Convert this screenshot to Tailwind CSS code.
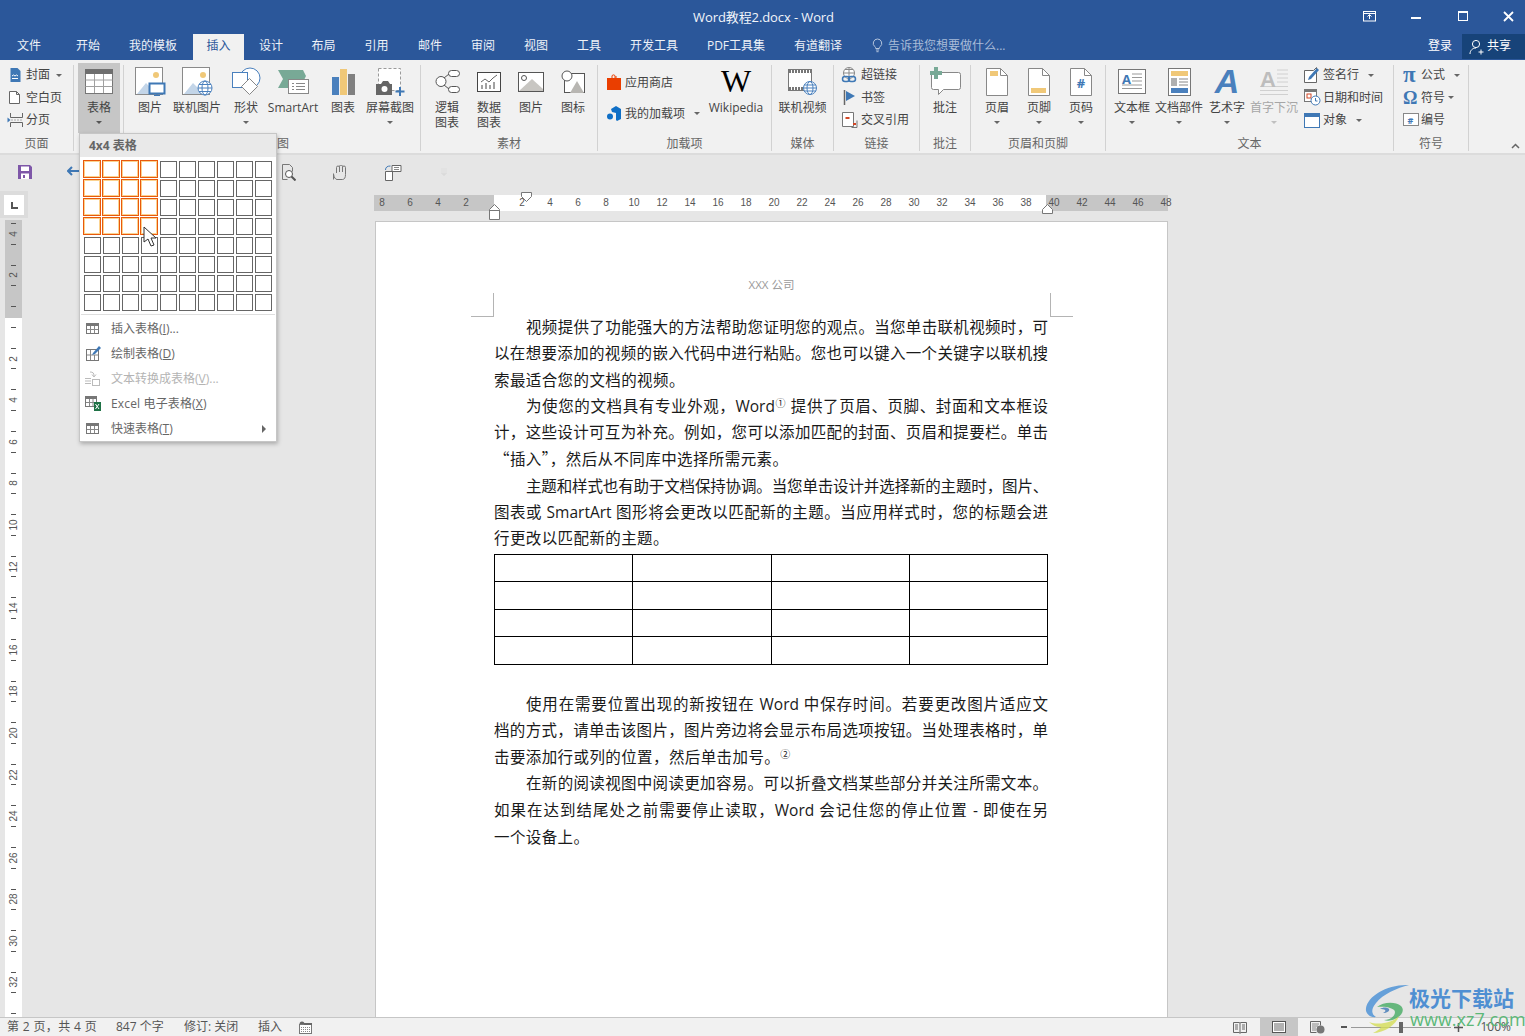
<!DOCTYPE html>
<html lang="zh-CN">
<head>
  <meta charset="UTF-8" />
  <title>Word教程2.docx - Word</title>
  <script src="https://cdn.jsdelivr.net/npm/@tailwindcss/browser@4"></script>
</head>
<body class="w-[1525px] h-[1036px] overflow-hidden relative bg-[#e6e6e6] text-[12px] text-[#444] font-['Open_Sans','Noto_Sans_CJK_SC',sans-serif]">

  <!-- Title bar -->
  <div class="h-[34px] bg-[#2b579a] grid grid-cols-[1fr_auto_1fr] items-center text-white">
    <div></div>
    <div class="text-[13px] tracking-[-0.1px] text-[#f2f5fa] mt-[1px] ml-[2px]">Word教程2.docx - Word</div>
    <div class="flex justify-end items-center h-full">
      <svg width="14" height="11" viewBox="0 0 14 11" class="mr-[34px] -mt-[2px]"><rect x=".5" y=".5" width="12" height="9.5" fill="none" stroke="#fff"/><path d="M.5 2.5h12M6.5 8V4M4.5 5.5l2-2 2 2" stroke="#fff" fill="none"/></svg>
      <div class="w-[10px] h-[2px] bg-white mr-[37px] mt-[2px]"></div>
      <div class="w-[10px] h-[10px] border border-white border-t-[2px] mr-[35px] -mt-[2px]"></div>
      <svg width="11" height="11" viewBox="0 0 11 11" class="mr-[11px] -mt-[2px]"><path d="M1 1l9 9M10 1l-9 9" stroke="#fff" stroke-width="1.8"/></svg>
    </div>
  </div>

  <!-- Tabs -->
  <div class="h-[26px] bg-[#2b579a] flex items-start text-[#eef2f8] relative">
    <div class="w-[58px] h-[25px] leading-[23px] text-center">文件</div>
    <div class="w-[60px] h-[25px] leading-[23px] text-center">开始</div>
    <div class="w-[70px] h-[25px] leading-[23px] text-center">我的模板</div>
    <div class="ml-[5px] w-[51px] h-[26px] leading-[23px] text-center bg-[#f1f1f1] text-[#2b579a]">插入</div>
    <div class="w-[54px] h-[25px] leading-[23px] text-center">设计</div>
    <div class="w-[51px] h-[25px] leading-[23px] text-center">布局</div>
    <div class="w-[55px] h-[25px] leading-[23px] text-center">引用</div>
    <div class="w-[52px] h-[25px] leading-[23px] text-center">邮件</div>
    <div class="w-[54px] h-[25px] leading-[23px] text-center">审阅</div>
    <div class="w-[52px] h-[25px] leading-[23px] text-center">视图</div>
    <div class="w-[54px] h-[25px] leading-[23px] text-center">工具</div>
    <div class="w-[76px] h-[25px] leading-[23px] text-center">开发工具</div>
    <div class="w-[88px] h-[25px] leading-[23px] text-center whitespace-nowrap">PDF工具集</div>
    <div class="w-[76px] h-[25px] leading-[23px] text-center">有道翻译</div>
    <div class="ml-[16px] h-[25px] flex items-center text-[#a9bcd8] -mt-[1px]">
      <svg width="11" height="15" viewBox="0 0 11 15" class="mr-[5px]"><path d="M5.5 1a4.3 4.3 0 0 0-2.6 7.7c.6.6.8 1 .8 1.8h3.6c0-.8.2-1.2.8-1.8A4.3 4.3 0 0 0 5.5 1zM3.9 12h3.2M4.4 13.7h2.2" fill="none" stroke="#b4c4dc"/></svg>
      <span>告诉我您想要做什么...</span>
    </div>
    <div class="ml-auto w-[40px] text-center h-[25px] leading-[23px] text-white">登录</div>
    <div class="ml-[2px] w-[63px] h-[25px] bg-[#174379] flex items-center text-white">
      <svg width="16" height="16" viewBox="0 0 16 16" class="ml-[7px] mr-[2px]"><circle cx="7" cy="5" r="3.6" fill="none" stroke="#fff"/><path d="M1 15c0-3.5 2.5-6 6-6M9.5 13h5M12 10.5v5" fill="none" stroke="#fff"/></svg>
      <span class="-mt-[2px]">共享</span>
    </div>
  </div>

  <!-- Ribbon -->
  <div class="h-[95px] bg-[#f1f1f1] border-b-2 border-[#dcdcdc] flex pt-[5px] items-start">

    <!-- 页面 -->
    <div class="w-[74px] h-[86px] border-r border-[#d2d2d2] flex flex-col">
      <div class="h-[72px] pl-[7px] -mt-[1px] mb-[1px]">
        <div class="h-[22.5px] flex items-center">
          <svg width="19" height="16" viewBox="0 0 19 16" class="shrink-0"><path d="M3.5 1h7l3 3v11h-10z" fill="#3f78b5"/><path d="M5 9l1.5-1 1.5 1 1.5-1 1.5 1" stroke="#fff" fill="none"/><path d="M5 11.5h6" stroke="#fff"/></svg>
          <span>封面</span><i class="ml-[6px] w-0 h-0 border-x-[3px] border-t-[3px] border-x-transparent border-t-[#666]"></i>
        </div>
        <div class="h-[22.5px] flex items-center">
          <svg width="19" height="15" viewBox="0 0 19 15" class="shrink-0"><path d="M2.5 1.5h7l3 3v9h-10z M9.5 1.5v3h3" fill="#fff" stroke="#666"/></svg>
          <span>空白页</span>
        </div>
        <div class="h-[22.5px] flex items-center">
          <svg width="19" height="16" viewBox="0 0 19 16" class="shrink-0"><path d="M3.5 1v4.5h12V1M3.5 15v-4.5h12V15" fill="none" stroke="#666"/><path d="M.5 5.5l3 2.5-3 2.5z" fill="#3f78b5"/><path d="M4 8h12" stroke="#aaa" stroke-dasharray="2 1"/></svg>
          <span>分页</span>
        </div>
      </div>
      <div class="text-center text-[#666] leading-[14px]">页面</div>
    </div>

    <!-- 表格 -->
    <div class="w-[50px] h-[86px] border-r border-[#d2d2d2] flex flex-col">
      <div class="ml-[4px] w-[42px] h-[70px] -mt-[2px] pt-[2px] bg-[#c6c6c6] flex flex-col items-center">
        <div class="h-[33px] flex items-center justify-center">
          <svg width="28" height="25" viewBox="0 0 28 25"><rect x=".5" y=".5" width="27" height="24" fill="#fff" stroke="#767676"/><rect width="28" height="5" fill="#6e6e6e"/><path d="M.5 11h27M.5 17.500h27M9.500 5v19M18.500 5v19" stroke="#a0a0a0" fill="none"/></svg>
        </div>
        <div class="h-[15px] leading-[15px] mt-[2px]">表格</div>
        <div class="h-[15px] flex items-center"><i class="w-0 h-0 border-x-[3px] border-t-[3px] border-x-transparent border-t-[#555]"></i></div>
      </div>
    </div>

    <!-- 插图 -->
    <div class="w-[297px] h-[86px] border-r border-[#d2d2d2] flex flex-col">
      <div class="h-[72px] pl-[3px] flex">
        <div class="w-[46px] flex flex-col items-center">
          <div class="h-[33px] flex items-center justify-center">
            <svg width="31" height="29" viewBox="0 0 31 29"><rect x=".5" y=".5" width="27" height="27" fill="#fff" stroke="#8a8a8a"/><circle cx="21" cy="8" r="3" fill="#f0c878"/><path d="M2 27l9-11 6 6 3-2 5 7z" fill="#c3d5e8"/><rect x="14.500" y="16.500" width="15" height="10" fill="#fff" stroke="#3f78b5" stroke-width="2"/><path d="M22 27v2M19 28.500h6" stroke="#3f78b5"/></svg>
          </div>
          <div class="h-[15px] leading-[15px] mt-[2px] whitespace-nowrap">图片</div>
        </div>
        <div class="w-[48px] flex flex-col items-center">
          <div class="h-[33px] flex items-center justify-center">
            <svg width="31" height="29" viewBox="0 0 31 29"><rect x=".5" y=".5" width="27" height="27" fill="#fff" stroke="#8a8a8a"/><circle cx="21" cy="8" r="3" fill="#f0c878"/><path d="M2 27l9-11 6 6 3-2 5 7z" fill="#c3d5e8"/><circle cx="23" cy="21" r="7" fill="#fff" stroke="#4a80bd"/><ellipse cx="23" cy="21" rx="3" ry="7" fill="none" stroke="#4a80bd"/><path d="M16 21h14M17 17.500h12M17 24.500h12" stroke="#4a80bd"/></svg>
          </div>
          <div class="h-[15px] leading-[15px] mt-[2px] whitespace-nowrap">联机图片</div>
        </div>
        <div class="w-[50px] flex flex-col items-center">
          <div class="h-[33px] flex items-start justify-center pt-[2px]">
            <svg width="31" height="28" viewBox="0 0 31 28"><circle cx="19" cy="11" r="10" fill="#fff" stroke="#4a80bd"/><rect x="1.500" y="5.500" width="15" height="15" fill="#fff" stroke="#4a80bd"/><path d="M18.500 11.500l8 8-8 8-8-8z" fill="#fff" stroke="#888"/></svg>
          </div>
          <div class="h-[15px] leading-[15px] mt-[2px] whitespace-nowrap">形状</div>
          <div class="h-[15px] flex items-center"><i class="w-0 h-0 border-x-[3px] border-t-[3px] border-x-transparent border-t-[#666]"></i></div>
        </div>
        <div class="w-[44px] flex flex-col items-center">
          <div class="h-[33px] flex items-center justify-center">
            <svg width="31" height="24" viewBox="0 0 31 24"><path d="M0 0h25l3 6-3 6H10v6H0l5-9z" fill="#78a996"/><rect x="10.500" y="9.500" width="20" height="14" fill="#fff" stroke="#888"/><path d="M14 13.500h2M18 13.500h9M14 16.500h2M18 16.500h9M14 19.500h2M18 19.500h9" stroke="#888"/></svg>
          </div>
          <div class="h-[15px] leading-[15px] mt-[2px] whitespace-nowrap">SmartArt</div>
        </div>
        <div class="w-[56px] flex flex-col items-center">
          <div class="h-[33px] flex items-center justify-center">
            <svg width="23" height="26" viewBox="0 0 23 26"><rect x="0" y="8" width="7" height="18" fill="#4a80bd"/><rect x="8" y="0" width="7" height="26" fill="#f0c878"/><rect x="16" y="5" width="7" height="21" fill="#808080"/></svg>
          </div>
          <div class="h-[15px] leading-[15px] mt-[2px] whitespace-nowrap">图表</div>
        </div>
        <div class="w-[38px] flex flex-col items-center">
          <div class="h-[33px] flex items-center justify-center">
            <svg width="30" height="28" viewBox="0 0 30 28"><rect x="3.500" y=".5" width="22" height="22" fill="#fff" stroke="#9a9a9a" stroke-dasharray="3 2"/><path d="M1 16h5l2-3h5l2 3h2v11H1z" fill="#666"/><circle cx="9.500" cy="21" r="3" fill="#fff"/><path d="M25 19v9M20.500 23.500h9" stroke="#3f78b5" stroke-width="2"/></svg>
          </div>
          <div class="h-[15px] leading-[15px] mt-[2px] whitespace-nowrap">屏幕截图</div>
          <div class="h-[15px] flex items-center"><i class="w-0 h-0 border-x-[3px] border-t-[3px] border-x-transparent border-t-[#666]"></i></div>
        </div>
      </div>
      <div class="text-[#666] leading-[14px] pl-[141px]">插图</div>
    </div>

    <!-- 素材 -->
    <div class="w-[177px] h-[86px] border-r border-[#d2d2d2] flex flex-col">
      <div class="h-[72px] pl-[5px] flex">
        <div class="w-[42px] flex flex-col items-center">
          <div class="h-[33px] flex items-center justify-center">
            <svg width="25" height="23" viewBox="0 0 25 23"><circle cx="6" cy="11.500" r="5" fill="#fff" stroke="#555"/><rect x="13.500" y=".5" width="11" height="6" rx="3" fill="#fff" stroke="#555"/><rect x="13.500" y="16.500" width="11" height="6" rx="3" fill="#fff" stroke="#555"/><path d="M9 8l5-4M9 15l5 4" stroke="#555"/></svg>
          </div>
          <div class="leading-[15px] mt-[2px] text-center">逻辑<br>图表</div>
        </div>
        <div class="w-[42px] flex flex-col items-center">
          <div class="h-[33px] flex items-center justify-center">
            <svg width="24" height="20" viewBox="0 0 24 20"><rect x=".5" y=".5" width="23" height="19" fill="#fff" stroke="#444"/><path d="M4 10l4-3 4 3 4-4 4-3" fill="none" stroke="#666"/><path d="M5 17v-4M9 17v-6M13 17v-4M17 17v-7" stroke="#444"/></svg>
          </div>
          <div class="leading-[15px] mt-[2px] text-center">数据<br>图表</div>
        </div>
        <div class="w-[42px] flex flex-col items-center">
          <div class="h-[33px] flex items-center justify-center">
            <svg width="26" height="20" viewBox="0 0 26 20"><rect x=".5" y=".5" width="25" height="19" fill="#fff" stroke="#555"/><circle cx="6" cy="6" r="2.500" fill="none" stroke="#555"/><path d="M1 19l13-12 11 10v2z" fill="#c8c6c2"/></svg>
          </div>
          <div class="h-[15px] leading-[15px] mt-[2px]">图片</div>
        </div>
        <div class="w-[42px] flex flex-col items-center">
          <div class="h-[33px] flex items-center justify-center">
            <svg width="24" height="24" viewBox="0 0 24 24"><rect x="3.500" y="3.500" width="20" height="19" fill="#fff" stroke="#555"/><circle cx="6" cy="6" r="5" fill="#fff" stroke="#555"/><path d="M9 23l7-12 7 12z" fill="#b8b6b2"/></svg>
          </div>
          <div class="h-[15px] leading-[15px] mt-[2px]">图标</div>
        </div>
      </div>
      <div class="text-center text-[#666] leading-[14px]">素材</div>
    </div>

    <!-- 加载项 -->
    <div class="w-[174px] h-[86px] border-r border-[#d2d2d2] flex flex-col">
      <div class="h-[72px] pl-[9px] flex">
        <div class="w-[94px] pt-[2px]">
          <div class="h-[31px] flex items-center">
            <svg width="18" height="17" viewBox="0 0 18 17" class="shrink-0"><path d="M0 4h14v12H0z" fill="#ea3e00"/><path d="M5 4V2c0-1.500 3-1.500 3 0v2M9 4V2" stroke="#ea3e00" fill="none"/></svg>
            <span>应用商店</span>
          </div>
          <div class="h-[31px] flex items-center">
            <svg width="18" height="15" viewBox="0 0 18 15" class="shrink-0"><path d="M4 3l5-3 5 3v10l-4 2-1-1V7L5 6z" fill="#0f6fc6"/><circle cx="3" cy="10.500" r="3" fill="#0f6fc6"/></svg>
            <span>我的加载项</span><i class="ml-[9px] w-0 h-0 border-x-[3px] border-t-[3px] border-x-transparent border-t-[#666]"></i>
          </div>
        </div>
        <div class="w-[70px] flex flex-col items-center">
          <div class="h-[33px] flex items-center justify-center text-[32px] leading-[33px] text-black font-['Liberation_Serif',serif]">W</div>
          <div class="h-[15px] leading-[15px] mt-[2px]">Wikipedia</div>
        </div>
      </div>
      <div class="text-center text-[#666] leading-[14px]">加载项</div>
    </div>

    <!-- 媒体 -->
    <div class="w-[62px] h-[86px] border-r border-[#d2d2d2] flex flex-col">
      <div class="h-[72px] flex flex-col items-center">
        <div class="h-[33px] flex items-center justify-center">
          <svg width="29" height="26" viewBox="0 0 29 26"><rect x=".5" y=".5" width="23" height="21" fill="#fff" stroke="#777"/><path d="M1 2.500h22M1 19.500h22" stroke="#777" stroke-width="3" stroke-dasharray="2 1"/><circle cx="22" cy="19" r="6.500" fill="#fff" stroke="#4a80bd"/><ellipse cx="22" cy="19" rx="3" ry="6.500" fill="none" stroke="#4a80bd"/><path d="M15.500 19h13M16 16h12M16 22h12" stroke="#4a80bd"/></svg>
        </div>
        <div class="h-[15px] leading-[15px] mt-[2px] whitespace-nowrap">联机视频</div>
      </div>
      <div class="text-center text-[#666] leading-[14px]">媒体</div>
    </div>

    <!-- 链接 -->
    <div class="w-[86px] h-[86px] border-r border-[#d2d2d2] flex flex-col">
      <div class="h-[72px] pl-[7px] -mt-[1px] mb-[1px]">
        <div class="h-[22.5px] flex items-center">
          <svg width="20" height="16" viewBox="0 0 20 16" class="shrink-0"><circle cx="8" cy="6" r="5.500" fill="#fff" stroke="#888"/><path d="M2.500 6h11M8 .5v11M4 2.500h8" stroke="#888" fill="none"/><rect x="1.500" y="9.500" width="7" height="5" rx="2.500" fill="none" stroke="#3f78b5" stroke-width="1.500"/><rect x="7.500" y="9.500" width="7" height="5" rx="2.500" fill="none" stroke="#3f78b5" stroke-width="1.500"/></svg>
          <span>超链接</span>
        </div>
        <div class="h-[22.5px] flex items-center">
          <svg width="20" height="15" viewBox="0 0 20 15" class="shrink-0"><path d="M3.500 0v15" stroke="#666" stroke-width="1.500"/><path d="M5 1l9 5-9 5z" fill="#3f78b5"/></svg>
          <span>书签</span>
        </div>
        <div class="h-[22.5px] flex items-center">
          <svg width="20" height="16" viewBox="0 0 20 16" class="shrink-0"><path d="M1.500 .5h11v14h-11z" fill="#fff" stroke="#777"/><path d="M4.500 6h4" stroke="#d24726" stroke-width="2"/><path d="M10.500 15.500h5.500v-7" fill="none" stroke="#777"/><path d="M12 12h3" stroke="#d24726" stroke-width="2"/></svg>
          <span>交叉引用</span>
        </div>
      </div>
      <div class="text-center text-[#666] leading-[14px]">链接</div>
    </div>

    <!-- 批注 -->
    <div class="w-[51px] h-[86px] border-r border-[#d2d2d2] flex flex-col">
      <div class="h-[72px] flex flex-col items-center">
        <div class="h-[33px] flex items-center justify-center">
          <svg width="31" height="29" viewBox="0 0 31 29"><path d="M3.500 5.500h25a2 2 0 0 1 2 2v13a2 2 0 0 1-2 2h-15l-5 5v-5h-5a2 2 0 0 1-2-2v-13a2 2 0 0 1 2-2z" fill="#fff" stroke="#888"/><path d="M6 0v12M0 6h12" stroke="#78a996" stroke-width="4"/></svg>
        </div>
        <div class="h-[15px] leading-[15px] mt-[2px]">批注</div>
      </div>
      <div class="text-center text-[#666] leading-[14px]">批注</div>
    </div>

    <!-- 页眉和页脚 -->
    <div class="w-[135px] h-[86px] border-r border-[#d2d2d2] flex flex-col">
      <div class="h-[72px] pl-[5px] flex">
        <div class="w-[42px] flex flex-col items-center">
          <div class="h-[33px] flex items-center justify-center">
            <svg width="22" height="28" viewBox="0 0 22 28"><path d="M.5.500h14l7 7v20H.500z" fill="#fff" stroke="#888"/><path d="M14.500.5v7h7" fill="none" stroke="#888"/><rect x="4" y="3" width="8" height="5" fill="#f0c878"/></svg>
          </div>
          <div class="h-[15px] leading-[15px] mt-[2px]">页眉</div>
          <div class="h-[15px] flex items-center"><i class="w-0 h-0 border-x-[3px] border-t-[3px] border-x-transparent border-t-[#666]"></i></div>
        </div>
        <div class="w-[42px] flex flex-col items-center">
          <div class="h-[33px] flex items-center justify-center">
            <svg width="22" height="28" viewBox="0 0 22 28"><path d="M.5.500h14l7 7v20H.500z" fill="#fff" stroke="#888"/><path d="M14.500.5v7h7" fill="none" stroke="#888"/><rect x="3" y="20" width="15" height="5" fill="#f0c878"/></svg>
          </div>
          <div class="h-[15px] leading-[15px] mt-[2px]">页脚</div>
          <div class="h-[15px] flex items-center"><i class="w-0 h-0 border-x-[3px] border-t-[3px] border-x-transparent border-t-[#666]"></i></div>
        </div>
        <div class="w-[42px] flex flex-col items-center">
          <div class="h-[33px] flex items-center justify-center relative">
            <svg width="22" height="28" viewBox="0 0 22 28"><path d="M.5.500h14l7 7v20H.500z" fill="#fff" stroke="#888"/><path d="M14.500.5v7h7" fill="none" stroke="#888"/></svg>
            <span class="absolute left-0 right-0 text-center top-[10px] text-[13px] leading-[16px] font-bold text-[#3f78b5]">#</span>
          </div>
          <div class="h-[15px] leading-[15px] mt-[2px]">页码</div>
          <div class="h-[15px] flex items-center"><i class="w-0 h-0 border-x-[3px] border-t-[3px] border-x-transparent border-t-[#666]"></i></div>
        </div>
      </div>
      <div class="text-center text-[#666] leading-[14px]">页眉和页脚</div>
    </div>

    <!-- 文本 -->
    <div class="w-[288px] h-[86px] border-r border-[#d2d2d2] flex flex-col">
      <div class="h-[72px] pl-[3px] flex">
        <div class="w-[46px] flex flex-col items-center">
          <div class="h-[33px] flex items-center justify-center relative">
            <svg width="28" height="25" viewBox="0 0 28 25"><rect x=".5" y=".5" width="27" height="24" fill="#fff" stroke="#777"/><path d="M14 5h10M14 8.500h10M14 12h10M4 16h20M4 19.500h20" stroke="#999"/></svg>
            <span class="absolute left-[3px] top-[6px] w-[11px] text-center text-[13px] leading-[16px] font-bold text-[#3f78b5]">A</span>
          </div>
          <div class="h-[15px] leading-[15px] mt-[2px] whitespace-nowrap">文本框</div>
          <div class="h-[15px] flex items-center"><i class="w-0 h-0 border-x-[3px] border-t-[3px] border-x-transparent border-t-[#666]"></i></div>
        </div>
        <div class="w-[48px] flex flex-col items-center">
          <div class="h-[33px] flex items-center justify-center">
            <svg width="23" height="28" viewBox="0 0 23 28"><rect x=".5" y=".5" width="22" height="27" fill="#fff" stroke="#777"/><rect x="3" y="3" width="17" height="5" fill="#f0c878"/><rect x="3" y="10" width="6" height="8" fill="#b0b0b0"/><path d="M11 11h9M11 14h9M11 17h9" stroke="#888"/><rect x="3" y="20" width="17" height="5" fill="#4a80bd"/></svg>
          </div>
          <div class="h-[15px] leading-[15px] mt-[2px] whitespace-nowrap">文档部件</div>
          <div class="h-[15px] flex items-center"><i class="w-0 h-0 border-x-[3px] border-t-[3px] border-x-transparent border-t-[#666]"></i></div>
        </div>
        <div class="w-[48px] flex flex-col items-center">
          <div class="h-[33px] flex items-center justify-center text-[34px] leading-[33px] font-bold italic text-[#4a80bd] font-['Liberation_Sans',sans-serif]">A</div>
          <div class="h-[15px] leading-[15px] mt-[2px] whitespace-nowrap">艺术字</div>
          <div class="h-[15px] flex items-center"><i class="w-0 h-0 border-x-[3px] border-t-[3px] border-x-transparent border-t-[#666]"></i></div>
        </div>
        <div class="w-[46px] flex flex-col items-center text-[#a6a6a6]">
          <div class="h-[33px] flex items-center justify-center relative w-[28px]">
            <svg width="28" height="28" viewBox="0 0 28 28"><path d="M17 2h11M17 6h11M17 10h11M17 14h11M0 18.500h28M0 22.500h28M0 26.500h28" stroke="#d0d0d0"/></svg>
            <span class="absolute left-0 top-[2px] text-[22px] leading-[26px] font-bold text-[#bdbdbd] font-['Liberation_Sans',sans-serif]">A</span>
          </div>
          <div class="h-[15px] leading-[15px] mt-[2px] whitespace-nowrap">首字下沉</div>
          <div class="h-[15px] flex items-center"><i class="w-0 h-0 border-x-[3px] border-t-[3px] border-x-transparent border-t-[#c0c0c0]"></i></div>
        </div>
        <div class="pl-[7px] -mt-[1px]">
          <div class="h-[22.5px] flex items-center">
            <svg width="19" height="16" viewBox="0 0 19 16" class="shrink-0"><path d="M.5 3.500h9l3-3v15h-12z" fill="#fff" stroke="#666"/><path d="M4 13l1-3 8-9 2 2-8 9z" fill="#3f78b5"/></svg>
            <span>签名行</span><i class="ml-[9px] w-0 h-0 border-x-[3px] border-t-[3px] border-x-transparent border-t-[#666]"></i>
          </div>
          <div class="h-[22.5px] flex items-center">
            <svg width="19" height="17" viewBox="0 0 19 17" class="shrink-0"><rect x=".5" y=".5" width="12" height="12" fill="#fff" stroke="#777"/><path d="M1 2h11" stroke="#777" stroke-width="2"/><rect x="3" y="5" width="4" height="4" fill="none" stroke="#d24726"/><circle cx="11.500" cy="11.500" r="4.500" fill="#fff" stroke="#3f78b5"/><path d="M11.500 9v3h2" fill="none" stroke="#3f78b5"/></svg>
            <span class="whitespace-nowrap">日期和时间</span>
          </div>
          <div class="h-[22.5px] flex items-center">
            <svg width="19" height="15" viewBox="0 0 19 15" class="shrink-0"><rect x=".5" y=".5" width="15" height="14" fill="#fff" stroke="#3f78b5"/><rect width="16" height="4" fill="#3f78b5"/></svg>
            <span>对象</span><i class="ml-[9px] w-0 h-0 border-x-[3px] border-t-[3px] border-x-transparent border-t-[#666]"></i>
          </div>
        </div>
      </div>
      <div class="text-center text-[#666] leading-[14px]">文本</div>
    </div>

    <!-- 符号 -->
    <div class="w-[75px] h-[86px] border-r border-[#d2d2d2] flex flex-col">
      <div class="h-[72px] pl-[9px] -mt-[1px] mb-[1px]">
        <div class="h-[22.5px] flex items-center">
          <span class="w-[18px] text-[23px] leading-[20px] font-bold text-[#3f78b5] font-['Liberation_Serif',serif]">π</span>
          <span>公式</span><i class="ml-[9px] w-0 h-0 border-x-[3px] border-t-[3px] border-x-transparent border-t-[#666]"></i>
        </div>
        <div class="h-[22.5px] flex items-center">
          <span class="w-[18px] text-[18px] leading-[20px] font-bold text-[#3f78b5] font-['Liberation_Serif',serif]">Ω</span>
          <span>符号</span><i class="ml-[3px] w-0 h-0 border-x-[3px] border-t-[3px] border-x-transparent border-t-[#666]"></i>
        </div>
        <div class="h-[22.5px] flex items-center relative">
          <svg width="18" height="14" viewBox="0 0 18 14" class="shrink-0"><rect x=".5" y=".5" width="15" height="12" fill="#fff" stroke="#888"/></svg>
          <span class="absolute left-[2px] w-[11px] text-center text-[9px] font-bold text-[#3f78b5]">#</span>
          <span>编号</span>
        </div>
      </div>
      <div class="text-center text-[#666] leading-[14px]">符号</div>
    </div>

    <div class="flex-1 h-[86px] flex items-end justify-end pr-[5px] pb-[2px]">
      <svg width="9" height="6" viewBox="0 0 9 6"><path d="M1 5l3.500-3.500L8 5" fill="none" stroke="#666" stroke-width="1.500"/></svg>
    </div>
  </div>

  <!-- Document area -->
  <div class="h-[862px] overflow-hidden bg-[#e6e6e6]">
    <!-- Quick access -->
    <div class="h-[40px] pb-[6px] flex items-center">
      <svg width="14" height="14" viewBox="0 0 14 14" class="ml-[18px]"><path d="M0 0h12l2 2v12H0z" fill="#7e57a8"/><rect x="3" y="1.500" width="8" height="4.500" fill="#fff"/><rect x="3" y="8.500" width="8" height="5.500" fill="#fff"/><rect x="5" y="10" width="2" height="3" fill="#7e57a8"/></svg>
      <svg width="12" height="12" viewBox="0 0 12 12" class="ml-[35px]"><path d="M5 1L1 5l4 4M1 5h11" fill="none" stroke="#3f78b5" stroke-width="2"/></svg>
      <svg width="15" height="17" viewBox="0 0 15 17" class="ml-[202px]"><path d="M1.500.5h7l3 3v4M1.500.5v15h5" fill="none" stroke="#777"/><circle cx="8" cy="10" r="3.500" fill="#fff" stroke="#555"/><path d="M10.500 12.500l4 4" stroke="#555" stroke-width="2"/></svg>
      <svg width="17" height="15" viewBox="0 0 17 15" class="ml-[36px]"><path d="M1.500 14.500v-6M4.500 8V2.500a1 1 0 0 1 3 0V7M7.500 7V1.500a1 1 0 0 1 3 0V7M10.500 7V2.500a1 1 0 0 1 3 0v7c0 3-1 5-3 5H5c-1.500 0-3-2-3.500-5.500" fill="none" stroke="#777"/></svg>
      <svg width="18" height="17" viewBox="0 0 18 17" class="ml-[35px]"><path d="M1.500 7.500h7v9h-7z" fill="#fff" stroke="#666"/><path d="M8 1.500h9v6H8z" fill="#fff" stroke="#666"/><path d="M10 3.500h5M10 5.500h5" stroke="#888"/><path d="M1.500 6c0-3 2-4 5-4" fill="none" stroke="#3f78b5"/></svg>
      <svg width="8" height="8" viewBox="0 0 8 8" class="ml-[38px]"><path d="M1 1h6M1 3h6M1 5l3 3 3-3z" fill="#dadada" stroke="#dedede"/></svg>
    </div>

    <div class="flex items-start">
      <!-- Corner + vertical ruler -->
      <div class="w-[375px] shrink-0">
        <div class="w-[28px] h-[27px] bg-[#dcdcdc] -mt-[4px] pt-[4px] pl-[4px]">
          <div class="w-[20px] h-[20px] bg-white flex items-center justify-center">
            <div class="w-[7px] h-[7px] border-l-2 border-b-2 border-[#555]"></div>
          </div>
        </div>
        <div class="ml-[5px] w-[17px] h-[800px] mt-[2px] overflow-hidden relative bg-white">
          <div class="absolute left-0 top-0 w-full h-[98px] bg-[#c6c6c6]"></div>
          <div id="vruler" class="relative -mt-[7px]"></div>
        </div>
      </div>

      <!-- Horizontal ruler + page -->
      <div class="w-[794px] -ml-[1px] shrink-0">
        <div class="h-[16px] flex relative">
          <div class="absolute left-0 top-0 h-full w-[120px] bg-[#c6c6c6]"></div>
          <div class="absolute left-[120px] top-0 h-full w-[552px] bg-white"></div>
          <div class="absolute left-[672px] top-0 h-full w-[122px] bg-[#c6c6c6]"></div>
          <div id="hruler" class="relative flex -ml-[6px] text-[10px] leading-[16px] text-[#555] font-['Liberation_Sans',sans-serif]"></div>
          <svg width="12" height="10" viewBox="0 0 12 10" class="absolute left-[147px] -top-[3px]"><path d="M.5.500h10v4l-5 5-5-5z" fill="#fff" stroke="#777"/></svg>
          <svg width="12" height="16" viewBox="0 0 12 16" class="absolute left-[115px] top-[9px]"><path d="M.5 15.500v-10l5-5 5 5v10zM.5 6.500h10" fill="#fff" stroke="#777"/></svg>
          <svg width="12" height="10" viewBox="0 0 12 10" class="absolute left-[668px] top-[9px]"><path d="M.5 9.500v-4l5-5 5 5v4z" fill="#fff" stroke="#777"/></svg>
        </div>

        <!-- Page -->
        <div class="mt-[10px] ml-[1px] w-[793px] h-[800px] bg-white border border-[#c6c6c6] text-[15.5px] leading-[26.6px] text-[#1a1a1a]">
          <div class="pt-[55px] h-[71px] text-center text-[11.500px] leading-[16px] text-[#9a9a9a]">XXX 公司</div>
          <div class="flex justify-between w-[602px] ml-[95px]">
            <div class="w-[23px] h-[24px] border-r border-b border-[#b4b4b4]"></div>
            <div class="w-[23px] h-[24px] border-l border-b border-[#b4b4b4]"></div>
          </div>
          <div class="w-[554px] ml-[118px] -mt-[3px]">
            <div class="leading-[26.3px]">
              <div class="indent-8 [text-align-last:justify]">视频提供了功能强大的方法帮助您证明您的观点。当您单击联机视频时，可</div>
              <div class="[text-align-last:justify]">以在想要添加的视频的嵌入代码中进行粘贴。您也可以键入一个关键字以联机搜</div>
              <div class="tracking-[0.4px]">索最适合您的文档的视频。</div>
              <div class="indent-8 [text-align-last:justify]">为使您的文档具有专业外观，Word<sup class="text-[10px] leading-[0]">①</sup> 提供了页眉、页脚、封面和文本框设</div>
              <div class="[text-align-last:justify]">计，这些设计可互为补充。例如，您可以添加匹配的封面、页眉和提要栏。单击</div>
              <div class="tracking-[0.4px]"><span class="font-['Noto_Sans_CJK_SC']">“插入”，</span>然后从不同库中选择所需元素。</div>
              <div class="indent-8 tracking-[-0.25px] whitespace-nowrap [text-align-last:justify]">主题和样式也有助于文档保持协调。当您单击设计并选择新的主题时，图片、</div>
              <div class="[text-align-last:justify]">图表或 SmartArt 图形将会更改以匹配新的主题。当应用样式时，您的标题会进</div>
              <div class="tracking-[0.4px]">行更改以匹配新的主题。</div>
            </div>
            <table class="mt-[2px] w-[554px] table-fixed border-collapse border border-black">
              <tbody>
                <tr class="h-[27.5px]"><td class="border border-black"></td><td class="border border-black"></td><td class="border border-black"></td><td class="border border-black"></td></tr>
                <tr class="h-[27.5px]"><td class="border border-black"></td><td class="border border-black"></td><td class="border border-black"></td><td class="border border-black"></td></tr>
                <tr class="h-[27.5px]"><td class="border border-black"></td><td class="border border-black"></td><td class="border border-black"></td><td class="border border-black"></td></tr>
                <tr class="h-[27.5px]"><td class="border border-black"></td><td class="border border-black"></td><td class="border border-black"></td><td class="border border-black"></td></tr>
              </tbody>
            </table>
            <div class="h-[26px]"></div>
            <div class="indent-8 [text-align-last:justify]">使用在需要位置出现的新按钮在 Word 中保存时间。若要更改图片适应文</div>
            <div class="[text-align-last:justify]">档的方式，请单击该图片，图片旁边将会显示布局选项按钮。当处理表格时，单</div>
            <div class="tracking-[0.4px]">击要添加行或列的位置，然后单击加号。<sup class="text-[10px] leading-[0]">②</sup></div>
            <div class="indent-8 [text-align-last:justify]">在新的阅读视图中阅读更加容易。可以折叠文档某些部分并关注所需文本。</div>
            <div class="[text-align-last:justify]">如果在达到结尾处之前需要停止读取，Word 会记住您的停止位置 - 即使在另</div>
            <div class="tracking-[0.4px]">一个设备上。</div>
          </div>
        </div>
      </div>
    </div>
  </div>

  <!-- Status bar -->
  <div class="h-[19px] bg-[#f1f1f1] border-t border-[#c6c6c6] flex items-center text-[12px] text-[#555]">
    <span class="ml-[7px] w-[109px] whitespace-nowrap tracking-[0.35px]">第 2 页，共 4 页</span>
    <span class="w-[68px] whitespace-nowrap">847 个字</span>
    <span class="w-[74px] whitespace-nowrap">修订: 关闭</span>
    <span class="w-[41px] whitespace-nowrap">插入</span>
    <svg width="13" height="13" viewBox="0 0 13 13"><circle cx="3" cy="3" r="2.500" fill="#666"/><rect x=".5" y="3.500" width="12" height="9" fill="#fff" stroke="#777"/><path d="M5 3h8" stroke="#666" stroke-width="2"/><path d="M2 6.500h9M2 8.500h9M2 10.500h9" stroke="#888" stroke-dasharray="1 1"/></svg>
    <svg width="14" height="13" viewBox="0 0 14 13" class="ml-auto"><path d="M.5 1.500h6l.5 1 .5-1h6v10h-6l-.5 1-.5-1h-6zM7 2.500v9M2 4h3M2 6h3M2 8h3M9 4h3M9 6h3M9 8h3" fill="none" stroke="#666"/></svg>
    <div class="ml-[13px] w-[38px] h-[18px] bg-[#c6c6c6] flex items-center justify-center">
      <svg width="14" height="12" viewBox="0 0 14 12"><rect x=".5" y=".5" width="13" height="11" fill="#fff" stroke="#555"/><path d="M2 3h10M2 5h10M2 7h10M2 9h10" stroke="#666"/></svg>
    </div>
    <svg width="15" height="13" viewBox="0 0 15 13" class="ml-[12px]"><path d="M.5.500h10v4M.5.500v11h6" fill="none" stroke="#666"/><path d="M2 3h7M2 5h6M2 7h4M2 9h4" stroke="#888"/><circle cx="10.500" cy="8.500" r="4" fill="#777"/></svg>
    <div class="ml-[16px] w-[6px] h-[2px] bg-[#555]"></div>
    <div class="ml-[4px] w-[100px] h-[1px] bg-[#999] relative flex items-center"><div class="ml-[48px] w-[4px] h-[11px] bg-[#666]"></div></div>
    <svg width="9" height="9" viewBox="0 0 9 9" class="ml-[3px]"><path d="M0 4.500h9M4.500 0v9" stroke="#555" stroke-width="1.500"/></svg>
    <span class="ml-[17px] mr-[14px]">100%</span>
  </div>

  <!-- Table dropdown menu -->
  <div class="absolute left-[79px] top-[133px] w-[198px] h-[309px] bg-white border border-[#c6c6c6] shadow-[1px_2px_4px_rgba(0,0,0,0.25)] text-[#666]">
    <div class="h-[23px] bg-[#e9e9e9] font-bold pl-[9px] leading-[23px]">4x4 表格</div>
    <div id="cellGrid" class="mt-[4px] ml-[4px] grid grid-cols-[repeat(10,17px)] grid-rows-[repeat(8,17px)] gap-[2px]"></div>
    <div class="mt-[3px] mx-[1px] h-[1px] bg-[#dedede]"></div>
    <div class="h-[25px] mt-[1px] flex items-center">
      <svg width="13" height="11" viewBox="0 0 13 11" class="ml-[6px] mr-[12px]"><rect x=".5" y=".5" width="12" height="10" fill="#fff" stroke="#777"/><rect width="13" height="3" fill="#777"/><path d="M4.500 3v7M8.500 3v7M1 6.500h11" stroke="#888"/></svg>
      <span>插入表格(<u>I</u>)...</span>
    </div>
    <div class="h-[25px] flex items-center">
      <svg width="15" height="15" viewBox="0 0 15 15" class="ml-[6px] mr-[10px]"><rect x=".5" y="3.500" width="12" height="11" fill="#fff" stroke="#777"/><path d="M4.500 4v10M8.500 9v5M1 9h11" stroke="#888"/><path d="M6 9l1-2 6-7 2 2-6 6z" fill="#3f78b5"/></svg>
      <span>绘制表格(<u>D</u>)</span>
    </div>
    <div class="h-[25px] flex items-center text-[#b4b4b4]">
      <svg width="15" height="15" viewBox="0 0 15 15" class="ml-[5px] mr-[11px]"><path d="M0 7.500h6M0 10h6M0 12.500h6" stroke="#bbb"/><rect x="7.500" y="8.500" width="7" height="6" fill="none" stroke="#bbb"/><path d="M5 1c3 0 4 1 4 4M7 3.500L9 6l2-2.500" fill="none" stroke="#bbb"/></svg>
      <span>文本转换成表格(<u>V</u>)...</span>
    </div>
    <div class="h-[25px] flex items-center">
      <svg width="16" height="15" viewBox="0 0 16 15" class="ml-[5px] mr-[10px]"><rect x=".5" y=".5" width="11" height="10" fill="#fff" stroke="#777"/><rect width="12" height="3" fill="#777"/><path d="M4.500 3v7M8 3v7M1 6.500h10" stroke="#888"/><rect x="9" y="6" width="7" height="9" fill="#1f7246"/><path d="M10.500 8l3.500 5M14 8l-3.500 5" stroke="#fff"/></svg>
      <span class="tracking-[0.15px]">Excel 电子表格(<u>X</u>)</span>
    </div>
    <div class="h-[25px] flex items-center">
      <svg width="13" height="11" viewBox="0 0 13 11" class="ml-[6px] mr-[12px]"><rect x=".5" y=".5" width="12" height="10" fill="#fff" stroke="#777"/><rect width="13" height="3" fill="#777"/><path d="M4.500 3v7M8.500 3v7M1 6.500h11" stroke="#888"/></svg>
      <span>快速表格(<u>T</u>)</span>
      <i class="ml-auto mr-[10px] w-0 h-0 border-y-[4px] border-l-[4px] border-y-transparent border-l-[#666]"></i>
    </div>
  </div>

  <!-- Mouse pointer -->
  <svg width="15" height="22" viewBox="0 0 15 22" class="absolute left-[143px] top-[226px]"><path d="M1 1v15l4-3 3 7 3-1-3-7h5z" fill="#fff" stroke="#333"/></svg>

  <!-- Watermark -->
  <div class="absolute left-[1365px] top-[984px] w-[155px] h-[50px]">
    <svg width="46" height="52" viewBox="0 0 46 52" class="absolute left-0 top-0">
      <path d="M44 1C22 0 3 12 1 24c-1 6 5 10 10 9-5-3-5-8 0-14C18 10 32 4 44 1z" fill="#4f93d6" opacity=".85"/>
      <path d="M12 23c6-5 18-6 24-1 4 4 1 10-6 13-4 2-8 2-11 1 5 0 11-3 11-8 0-4-10-6-18-5z" fill="#4fae6a" opacity=".85"/>
      <path d="M4 38c8 3 22 2 30-6-3 9-15 17-26 17 4-2 7-4 8-6-5 0-9-2-12-5z" fill="#d4dd58" opacity=".8"/>
      <path d="M15 25c3-2 7-2 9 0 1 2-2 4-6 4 2-1 3-2 2-3-1-1-3-1-5-1z" fill="#3f78b5" opacity=".8"/>
    </svg>
    <div class="absolute left-[44px] -top-[1px] text-[21px] leading-[28px] font-bold whitespace-nowrap text-[#4f8fd2] font-['Noto_Sans_CJK_SC',sans-serif]">极光下载站</div>
    <div class="absolute left-[45px] top-[25px] text-[18px] leading-[20px] whitespace-nowrap text-[#5cb878] font-['Open_Sans',sans-serif]">www.xz7.com</div>
  </div>

  <script>
    // table size picker
    const cellGrid = document.getElementById('cellGrid');
    for (let r = 0; r < 8; r++) {
      for (let c = 0; c < 10; c++) {
        const cell = document.createElement('div');
        cell.className = (r < 4 && c < 4)
          ? 'w-[18px] h-[18px] -ml-[1px] -mt-[1px] bg-white border border-[#e8590c] shadow-[inset_0_0_0_1px_#fbd390]'
          : 'w-[17px] h-[17px] bg-white border border-[#666]';
        cellGrid.appendChild(cell);
      }
    }

    // top ruler
    const hruler = document.getElementById('hruler');
    const topNums = [8, 6, 4, 2, ''];
    for (let n = 2; n <= 48; n += 2) topNums.push(n);
    topNums.forEach(n => {
      const s = document.createElement('span');
      s.className = 'w-[28px] shrink-0 text-center';
      s.textContent = n;
      hruler.appendChild(s);
    });

    // left ruler
    const vruler = document.getElementById('vruler');
    const sideNums = [4, 2, ''];
    for (let n = 2; n <= 32; n += 2) sideNums.push(n);
    sideNums.push('');
    sideNums.forEach(n => {
      const seg = document.createElement('div');
      seg.className = 'h-[41.6px] flex flex-col items-center justify-between py-[10px]';
      seg.innerHTML = '<div class="w-[5px] h-[1px] bg-[#555]"></div>' +
        '<span class="-rotate-90 text-[10px] leading-[10px] text-[#555] font-[\'Liberation_Sans\',sans-serif]">' + n + '</span>' +
        '<div class="w-[5px] h-[1px] bg-[#555]"></div>';
      vruler.appendChild(seg);
    });
  </script>
</body>
</html>
